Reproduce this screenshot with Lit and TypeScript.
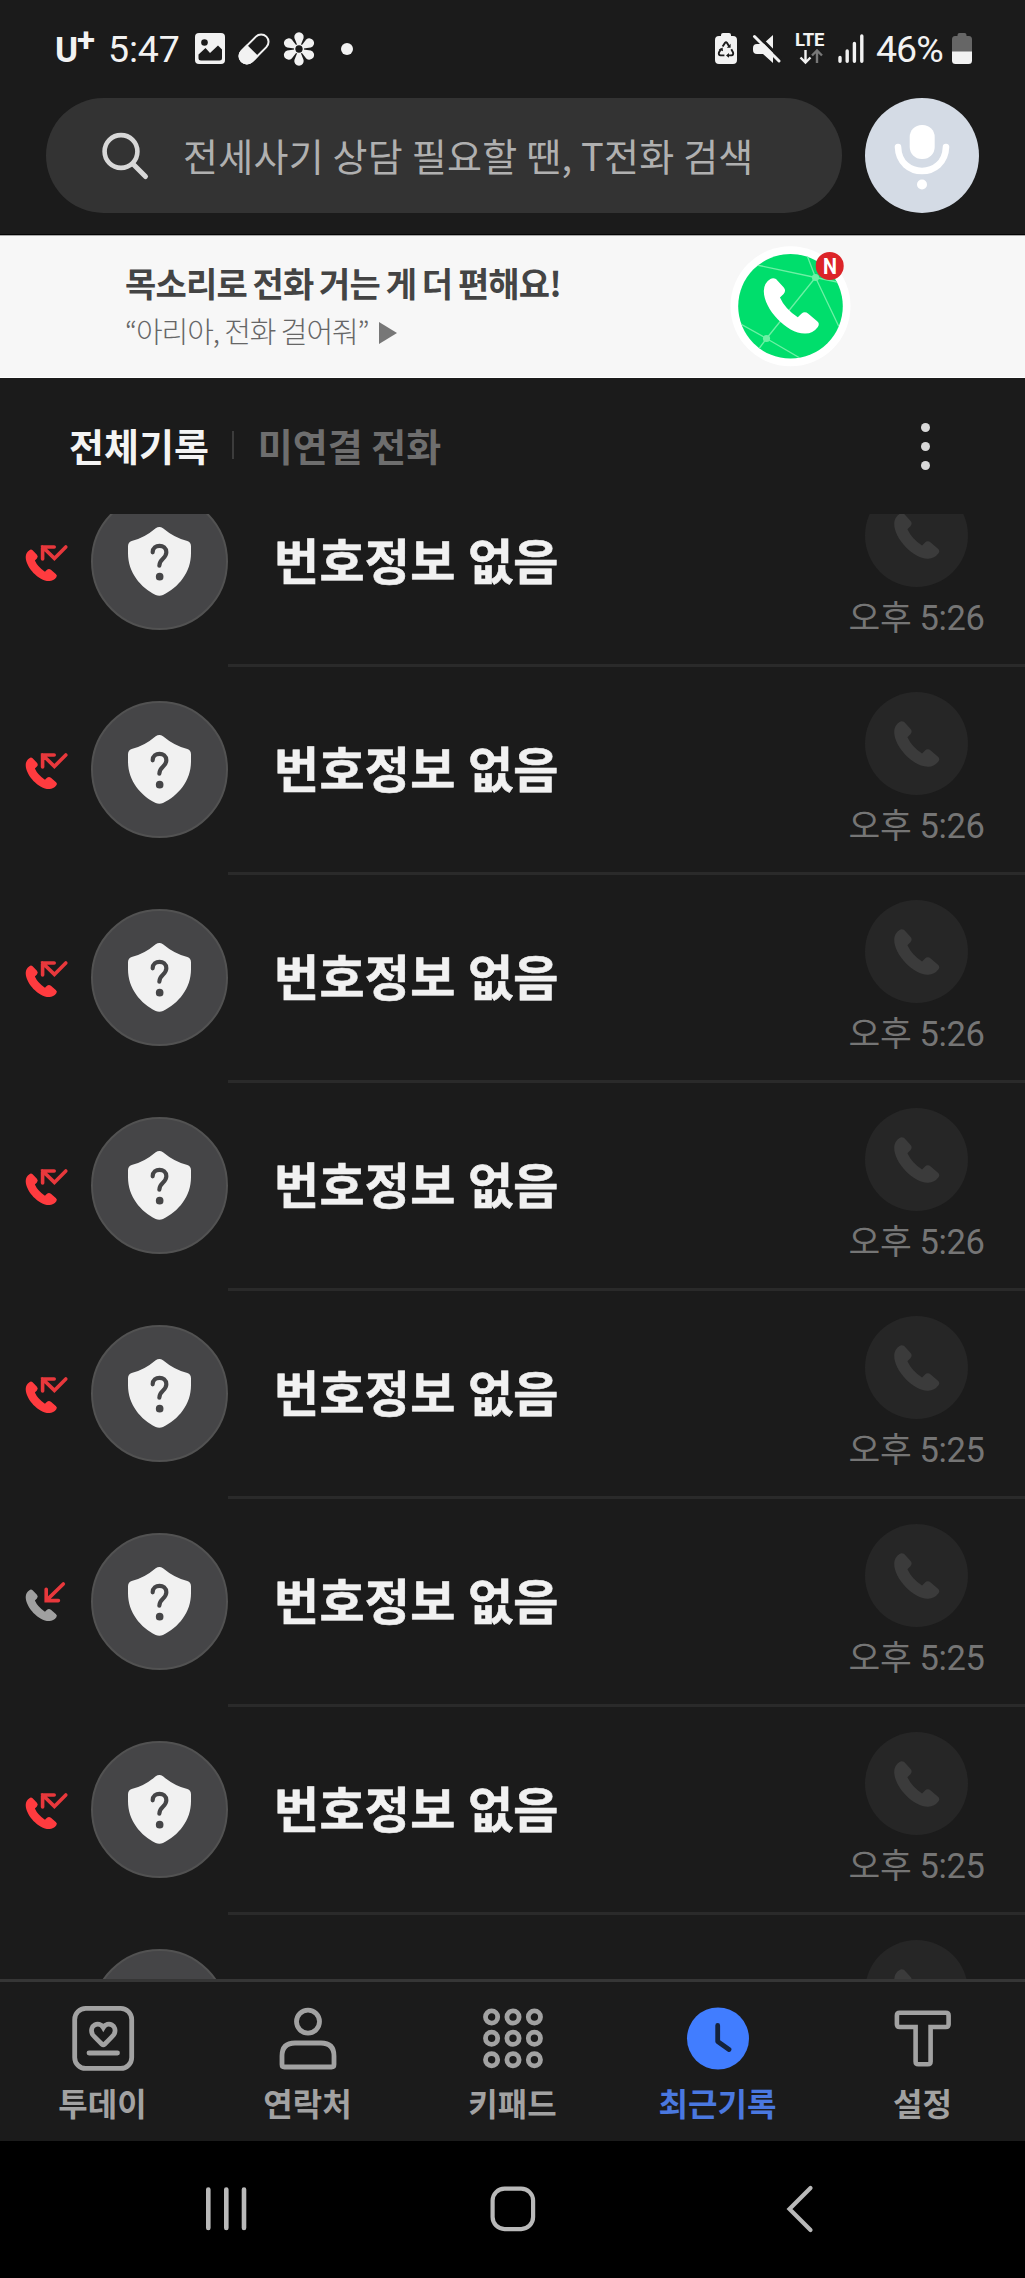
import { LitElement, html, svg, css } from "lit";
import { customElement, property } from "lit/decorators.js";

type CallKind = "missed" | "incoming";

interface CallEntry {
  kind: CallKind;
  name: string;
  time: string;
}

interface NavTab {
  label: string;
  icon: unknown;
  active?: boolean;
}

// Handset silhouette drawn on a 168 x 170 grid.
const HANDSET =
  "M20 4 Q28 -2 37 4 L60 29 Q69 39 60 49 L49 60 Q64 94 103 120 L114 109 Q124 100 135 109 L161 131 Q171 139 164 149 Q148 170 124 169 C70 169 0 95 0 40 Q1 15 20 4Z";

const handset = (x: number, y: number, size: number, fill: string) => svg`
  <path transform="translate(${x} ${y}) scale(${size / 168})" d=${HANDSET} fill=${fill}></path>`;

@customElement("status-bar")
class StatusBar extends LitElement {
  static styles = css`
    :host { display: flex; justify-content: space-between; height: 98px; color: #f2f2f2; font-family: Roboto, sans-serif; }
    .left, .right { display: flex; align-items: center; height: 97px; }
    .left { padding-left: 55px; }
    .right { padding-right: 53px; }
    svg { display: block; flex: none; }
    .carrier { display: flex; width: 53px; height: 40px; font-weight: 700; }
    .carrier-u { font-size: 35px; line-height: 44px; }
    .carrier-plus { font-size: 33px; line-height: 21px; margin-left: -1px; }
    .clock { width: 87px; font-size: 37.5px; line-height: 44px; letter-spacing: -0.2px; }
    .pill { margin-left: 13px; }
    .flower { margin-left: 13px; }
    .dot { width: 12px; height: 12px; border-radius: 50%; background: #f2f2f2; margin-left: 26px; }
    .mute { margin-left: 15px; }
    .lte { display: flex; flex-direction: column; width: 34px; margin-left: 13px; }
    .lte-text { font-size: 18.5px; line-height: 15px; font-weight: 700; height: 16px; letter-spacing: -0.2px; }
    .signal { margin-left: 9px; }
    .percent { width: 75px; margin-left: 12px; font-size: 37.5px; line-height: 44px; letter-spacing: -1px; white-space: nowrap; }
    .level { margin-left: 1px; }
  `;

  render() {
    return html`
      <div class="left">
        <div class="carrier"><span class="carrier-u">U</span><span class="carrier-plus">+</span></div>
        <span class="clock">5:47</span>
        <svg width="30" height="31" viewBox="0 0 30 31">
          <rect width="30" height="31" rx="4" fill="#f2f2f2"></rect>
          <path d="M3.5 21.5 L10.5 15 L15 20 L23 12.5 L27 16.5 V25 Q27 27.5 24.5 27.5 H6 Q3.5 27.5 3.5 25Z" fill="#1b1b1b"></path>
          <circle cx="9.5" cy="9.5" r="3.3" fill="#1b1b1b"></circle>
        </svg>
        <svg class="pill" width="32" height="32" viewBox="0 0 32 32">
          <g transform="rotate(-45 16 16)">
            <rect x="-1.5" y="8.6" width="35" height="14.8" rx="7.4" fill="none" stroke="#f2f2f2" stroke-width="2"></rect>
            <path d="M14 7.6 H6 A8.4 8.4 0 0 0 6 24.4 H14Z" fill="#f2f2f2"></path>
          </g>
        </svg>
        <svg class="flower" width="32" height="34" viewBox="-16 -17 32 34">
          ${[0, 60, 120, 180, 240, 300].map(
            (a) => svg`<path transform="rotate(${a})" d="M-1.8 -4 L-4.6 -11 A4.7 4.7 0 1 1 4.6 -11 L1.8 -4Z" fill="#f2f2f2"></path>`
          )}
          <circle r="4.4" fill="none" stroke="#f2f2f2" stroke-width="1.4"></circle>
        </svg>
        <span class="dot"></span>
      </div>
      <div class="right">
        <svg width="22" height="31" viewBox="0 0 22 31">
          <path d="M6 3 V2 Q6 0 8 0 H14 Q16 0 16 2 V3 H18 Q22 3 22 7 V27 Q22 31 18 31 H4 Q0 31 0 27 V7 Q0 3 4 3Z" fill="#f2f2f2"></path>
          <g fill="none" stroke="#1b1b1b" stroke-width="1.9">
            <path d="M7.6 13.6 L10 9.9 Q11 8.6 12 9.9 L14.2 13.4"></path>
            <path d="M16.3 16.2 L18 19.4 Q18.8 22 16.4 22.4 H12.8"></path>
            <path d="M9.4 22.4 H5.6 Q3.2 22 4 19.4 L6 16"></path>
          </g>
          <path d="M15.6 10.8 V14.8 H11.8Z M14 20 V24.8 L11 22.4Z M3.8 16.4 L7.6 14.6 L8 18.2Z" fill="#1b1b1b"></path>
        </svg>
        <svg class="mute" width="30" height="30" viewBox="0 0 30 30">
          <path d="M21 1 V29 L11 20 H5 Q1 20 1 16 V14 Q1 10 5 10 H11Z" fill="#f2f2f2"></path>
          <path d="M4.5 0 L30 26" stroke="#1b1b1b" stroke-width="3"></path>
          <path d="M2.5 2.5 L27 27" stroke="#f2f2f2" stroke-width="3" stroke-linecap="round"></path>
        </svg>
        <div class="lte">
          <span class="lte-text">LTE</span>
          <svg width="34" height="16" viewBox="0 0 34 16" fill="none" stroke-width="2.4">
            <path d="M10.5 1 V13 M5.5 8.5 L10.5 13.5 L15.5 8.5" stroke="#f2f2f2"></path>
            <path d="M22 14 V2 M17 6.5 L22 1.5 L27 6.5" stroke="#777"></path>
          </svg>
        </div>
        <svg class="signal" width="26" height="30" viewBox="0 0 26 30" stroke="#f2f2f2" stroke-width="3.4" stroke-linecap="round">
          <path d="M2 23.5 V27.3 M9.2 17 V27.3 M16.4 9.5 V27.3 M23.8 2 V27.3"></path>
        </svg>
        <span class="percent">46%</span>
        <svg class="level" width="20" height="31" viewBox="0 0 20 31">
          <path d="M5.5 3 V2 Q5.5 0 7.5 0 H12.5 Q14.5 0 14.5 2 V3 H17 Q20 3 20 6.5 V19 H0 V6.5 Q0 3 3 3Z" fill="#666"></path>
          <path d="M0 18.5 H20 V27.5 Q20 31 16.5 31 H3.5 Q0 31 0 27.5Z" fill="#f2f2f2"></path>
        </svg>
      </div>
    `;
  }
}

@customElement("search-header")
class SearchHeader extends LitElement {
  static styles = css`
    :host { display: flex; gap: 24px; height: 137px; padding: 0 45px 0 46px; box-sizing: border-box; border-bottom: 1px solid #050505; }
    .field { display: flex; align-items: center; width: 796px; height: 115px; border-radius: 58px; background: #333; }
    .glass { margin-left: 55px; }
    .hint { margin-left: 32px; font-size: 38px; line-height: 56px; padding-bottom: 2px; letter-spacing: 0.25px; color: #b0b0b0; white-space: nowrap; }
    .mic { width: 114px; height: 115px; border-radius: 50%; background: #d4dbe5; flex: none; margin-left: -1px; }
    svg { display: block; flex: none; }
  `;

  render() {
    return html`
      <div class="field">
        <svg class="glass" width="50" height="50" viewBox="0 0 50 50" fill="none" stroke="#d8d8d8" stroke-linecap="round">
          <circle cx="20" cy="20.5" r="16.4" stroke-width="4.6"></circle>
          <path d="M32.5 33.5 L44.5 45.5" stroke-width="5"></path>
        </svg>
        <span class="hint">전세사기 상담 필요할 땐, T전화 검색</span>
      </div>
      <div class="mic">
        <svg width="114" height="115" viewBox="0 0 114 115">
          <rect x="44.7" y="27" width="25" height="34" rx="12" fill="#fff"></rect>
          <path d="M33 49 C34 81 80 81 81 49" fill="none" stroke="#fff" stroke-width="6.6" stroke-linecap="round"></path>
          <circle cx="57" cy="86.5" r="5" fill="#fff"></circle>
        </svg>
      </div>
    `;
  }
}

@customElement("promo-banner")
class PromoBanner extends LitElement {
  static styles = css`
    :host { display: flex; height: 143px; box-sizing: border-box; background: #f7f7f7; border-top: 1px solid #aaa; border-bottom: 1px solid #fff; padding-left: 125px; }
    .copy { width: 602px; padding-top: 24px; white-space: nowrap; }
    .title { font-size: 34px; line-height: 46px; font-weight: 700; letter-spacing: -0.8px; word-spacing: -1.3px; color: #444; }
    .sub { display: flex; align-items: center; font-size: 29px; line-height: 46px; font-weight: 300; letter-spacing: -1.08px; color: #666; margin-top: 1px; }
    .play { margin: 5px 0 0 10px; }
    .badge-text { font: 700 22px Roboto, sans-serif; }
    svg { display: block; flex: none; }
  `;

  render() {
    return html`
      <div class="copy">
        <div class="title">목소리로 전화 거는 게 더 편해요!</div>
        <div class="sub">
          <span>“아리아, 전화 걸어줘”</span>
          <svg class="play" width="18" height="22" viewBox="0 0 18 22"><path d="M0 0 L18 11 L0 22Z" fill="#777"></path></svg>
        </div>
      </div>
      <svg width="130" height="141" viewBox="727 236 130 141">
        <defs><clipPath id="disc"><circle cx="790.5" cy="306.3" r="52.3"></circle></clipPath></defs>
        <circle cx="790.5" cy="306.3" r="60" fill="#fff"></circle>
        <circle cx="790.5" cy="306.3" r="52.3" fill="#00de6c"></circle>
        <g clip-path="url(#disc)" stroke="#6cf0a4" stroke-width="1.3" fill="none">
          <path d="M757 265 L815.5 277.5 L842 283 M805 250 L815.5 277.5 L841 331 M815.5 277.5 L766.5 338.5 L758 350 M737 322 L766.5 338.5 L805 361"></path>
          <circle cx="815.5" cy="277.5" r="3.6" fill="#6cf0a4" stroke="none"></circle>
          <circle cx="766.5" cy="338.5" r="3.6" fill="#6cf0a4" stroke="none"></circle>
        </g>
        ${handset(763.8, 277.8, 55.4, "#fff")}
        <circle cx="829.7" cy="266" r="14" fill="#dc2428"></circle>
        <text class="badge-text" x="830" y="273.8" text-anchor="middle" fill="#fff" textLength="14" lengthAdjust="spacingAndGlyphs">N</text>
      </svg>
    `;
  }
}

@customElement("record-tabs")
class RecordTabs extends LitElement {
  static styles = css`
    :host { display: flex; align-items: center; height: 136px; box-sizing: border-box; padding: 0 95px 0 69px; font-size: 38px; line-height: 56px; font-weight: 700; }
    .tab { color: #6e6e6e; padding-bottom: 3px; white-space: nowrap; }
    .selected { color: #f4f4f4; }
    .rule { width: 2px; height: 28px; background: #3c3c3c; margin: 0 24px 2px 23px; }
    .more { display: flex; flex-direction: column; gap: 10px; margin-left: auto; }
    .more span { width: 9px; height: 9px; border-radius: 50%; background: #d9d9d9; }
  `;

  render() {
    return html`
      <span class="tab selected">전체기록</span>
      <span class="rule"></span>
      <span class="tab">미연결 전화</span>
      <div class="more"><span></span><span></span><span></span></div>
    `;
  }
}

@customElement("call-row")
class CallRow extends LitElement {
  @property({ attribute: false }) entry!: CallEntry;

  static styles = css`
    :host { display: block; height: 208px; flex: none; }
    .content { display: flex; align-items: center; height: 205px; }
    .divider { height: 3px; background: #2a2a2a; margin-left: 228px; }
    .kind { margin: 0 0 0 24px; }
    .avatar { display: flex; align-items: center; justify-content: center; width: 137px; height: 137px; box-sizing: border-box; border: 2px solid #525252; border-radius: 50%; background: #454547; margin-left: 21px; flex: none; }
    .name { font-size: 49px; line-height: 70px; font-weight: 700; color: #f1f1f1; -webkit-text-stroke: 0.6px #f1f1f1; margin-left: 46px; padding-bottom: 5px; letter-spacing: 0.3px; word-spacing: 1px; white-space: nowrap; }
    .action { display: flex; flex-direction: column; align-items: center; height: 205px; width: 140px; margin: 0 38px 0 auto; box-sizing: border-box; padding-top: 25px; }
    .call { display: flex; align-items: center; justify-content: center; width: 103px; height: 103px; border-radius: 50%; background: #262626; margin-right: 1px; }
    .time { font-family: Roboto, "Noto Sans CJK KR", sans-serif; font-size: 34.5px; line-height: 48px; margin: 7px 1px 0 0; letter-spacing: -0.4px; color: #757575; white-space: nowrap; }
    svg { display: block; flex: none; }
  `;

  private kindIcon() {
    const missed = this.entry.kind === "missed";
    return html`
      <svg class="kind" width="46" height="42" viewBox="0 0 46 42">
        ${handset(1.7, 8.4, 31.4, missed ? "#ff3b3f" : "#a0a0a0")}
        <path
          d=${missed ? "M18.6 18 V6 H30.2 M18.6 6 L30.4 17.4 L41.8 6" : "M39.3 3 L22.2 19.6 M22.2 8.2 V19.6 H34.4"}
          fill="none" stroke="#e8383c" stroke-width="3.6" stroke-linecap="round"></path>
      </svg>`;
  }

  render() {
    return html`
      <div class="content">
        ${this.kindIcon()}
        <div class="avatar">
          <svg width="63" height="69" viewBox="384 643 189 207">
            <path fill="#f1f1f1" d="M467 647 Q478 639 489 647 Q525 677 562 685 Q573 689 573 701 V722 C573 780 535 825 489 847 Q478 852 467 847 C422 825 384 780 384 722 V701 Q384 689 395 685 Q432 677 467 647Z"></path>
            <path fill="none" stroke="#454547" stroke-width="12.5" stroke-linecap="round" d="M458 719 C458 693 499 693 499 719 C499 739 478 738 478 759"></path>
            <circle cx="479" cy="792" r="11.5" fill="#454547"></circle>
          </svg>
        </div>
        <span class="name">${this.entry.name}</span>
        <div class="action">
          <div class="call">
            <svg width="46" height="46" viewBox="0 0 46 46">${handset(0.2, 0, 45.4, "#3b3b3b")}</svg>
          </div>
          <span class="time">${this.entry.time}</span>
        </div>
      </div>
      <div class="divider"></div>
    `;
  }
}

const todayIcon = svg`
  <rect x="3.7" y="2.4" width="57" height="60" rx="11"></rect>
  <path d="M32.3 21.6 C28 14.6 17.6 19.4 21.4 28.2 Q22 29.4 31 38.2 Q32.3 39.4 33.6 38.2 Q42.4 29.6 43.2 28 C47 19.4 36.6 14.6 32.3 21.6Z"></path>
  <path d="M18 47 H46.5" stroke-linecap="round"></path>`;

const contactIcon = svg`
  <circle cx="32" cy="15.6" r="11.5"></circle>
  <path d="M6 58.5 V50 Q6 37 19 37 H45 Q58 37 58 50 V58.5 Q58 61 55.5 61 H8.5 Q6 61 6 58.5Z"></path>`;

const keypadIcon = svg`${[11, 32.3, 53.7].map((y) =>
  [10.6, 32, 53.4].map((x) => svg`<circle cx=${x} cy=${y} r="6.1"></circle>`)
)}`;

const recentIcon = svg`
  <circle cx="32" cy="32.5" r="31" fill="#417dff" stroke="none"></circle>
  <path d="M31.7 19.5 V35.5 L43 43.5" stroke="#14233c" stroke-linecap="round" stroke-linejoin="round"></path>`;

const settingsIcon = svg`
  <path stroke-width="4.6" d="M8.7 6.8 H54.8 Q57.6 6.8 57.6 9.6 V18.2 Q57.6 21 54.8 21 H39.6 V55.4 Q39.6 58.2 36.8 58.2 H27.4 Q24.6 58.2 24.6 55.4 V21 H8.7 Q5.9 21 5.9 18.2 V9.6 Q5.9 6.8 8.7 6.8Z"></path>`;

@customElement("bottom-tabs")
class BottomTabs extends LitElement {
  static styles = css`
    :host { display: grid; grid-template-columns: repeat(5, 1fr); height: 162px; box-sizing: border-box; border-top: 3px solid #363636; background: #1b1b1b; }
    .tab { display: flex; flex-direction: column; align-items: center; padding-top: 24px; color: #a2a2a2; font-size: 32px; line-height: 46px; font-weight: 700; white-space: nowrap; }
    .active { color: #4a78e0; }
    svg { display: block; margin-bottom: 8px; }
  `;

  private tabs: NavTab[] = [
    { label: "투데이", icon: todayIcon },
    { label: "연락처", icon: contactIcon },
    { label: "키패드", icon: keypadIcon },
    { label: "최근기록", icon: recentIcon, active: true },
    { label: "설정", icon: settingsIcon },
  ];

  render() {
    return this.tabs.map(
      (t) => html`
        <div class=${t.active ? "tab active" : "tab"}>
          <svg width="64" height="65" viewBox="0 0 64 65" fill="none" stroke="#a2a2a2" stroke-width="4.8">${t.icon}</svg>
          <span>${t.label}</span>
        </div>`
    );
  }
}

@customElement("system-nav")
class SystemNav extends LitElement {
  static styles = css`
    :host { display: grid; grid-template-columns: 133px 185px 389px 186px 132px; align-items: center; height: 137px; padding-bottom: 1px; box-sizing: border-box; background: #000; }
    svg { display: block; justify-self: center; }
    .recents { grid-column: 2; }
    .back { grid-column: 4; }
  `;

  render() {
    return html`
      <svg class="recents" width="44" height="46" viewBox="0 0 44 46" stroke="#b9b9b9" stroke-width="4.6" stroke-linecap="round">
        <path d="M4.3 3.5 V42 M22.3 3.5 V42 M40 3.5 V42"></path>
      </svg>
      <svg width="46" height="46" viewBox="0 0 46 46"><rect x="2.6" y="2.6" width="40.5" height="40.5" rx="12" fill="none" stroke="#b9b9b9" stroke-width="4.2"></rect></svg>
      <svg class="back" width="28" height="48" viewBox="0 0 28 48"><path d="M24.5 3 L3.5 24 L24.5 45" fill="none" stroke="#b9b9b9" stroke-width="4.2" stroke-linecap="round"></path></svg>
    `;
  }
}

@customElement("app-root")
class AppRoot extends LitElement {
  static styles = css`
    :host { display: flex; flex-direction: column; width: 1025px; height: 2278px; overflow: hidden; background: #1b1b1b; font-family: "Noto Sans CJK KR", sans-serif; }
    .list { display: flex; flex-direction: column; height: 1465px; overflow: hidden; }
    .rows { margin-top: -55px; }
  `;

  private calls: CallEntry[] = [
    ...["오후 5:26", "오후 5:26", "오후 5:26", "오후 5:26", "오후 5:25"].map(
      (time): CallEntry => ({ kind: "missed", name: "번호정보 없음", time })
    ),
    { kind: "incoming", name: "번호정보 없음", time: "오후 5:25" },
    { kind: "missed", name: "번호정보 없음", time: "오후 5:25" },
    { kind: "missed", name: "번호정보 없음", time: "오후 5:25" },
  ];

  render() {
    return html`
      <status-bar></status-bar>
      <search-header></search-header>
      <promo-banner></promo-banner>
      <record-tabs></record-tabs>
      <div class="list">
        <div class="rows">${this.calls.map((c) => html`<call-row .entry=${c}></call-row>`)}</div>
      </div>
      <bottom-tabs></bottom-tabs>
      <system-nav></system-nav>
    `;
  }
}
